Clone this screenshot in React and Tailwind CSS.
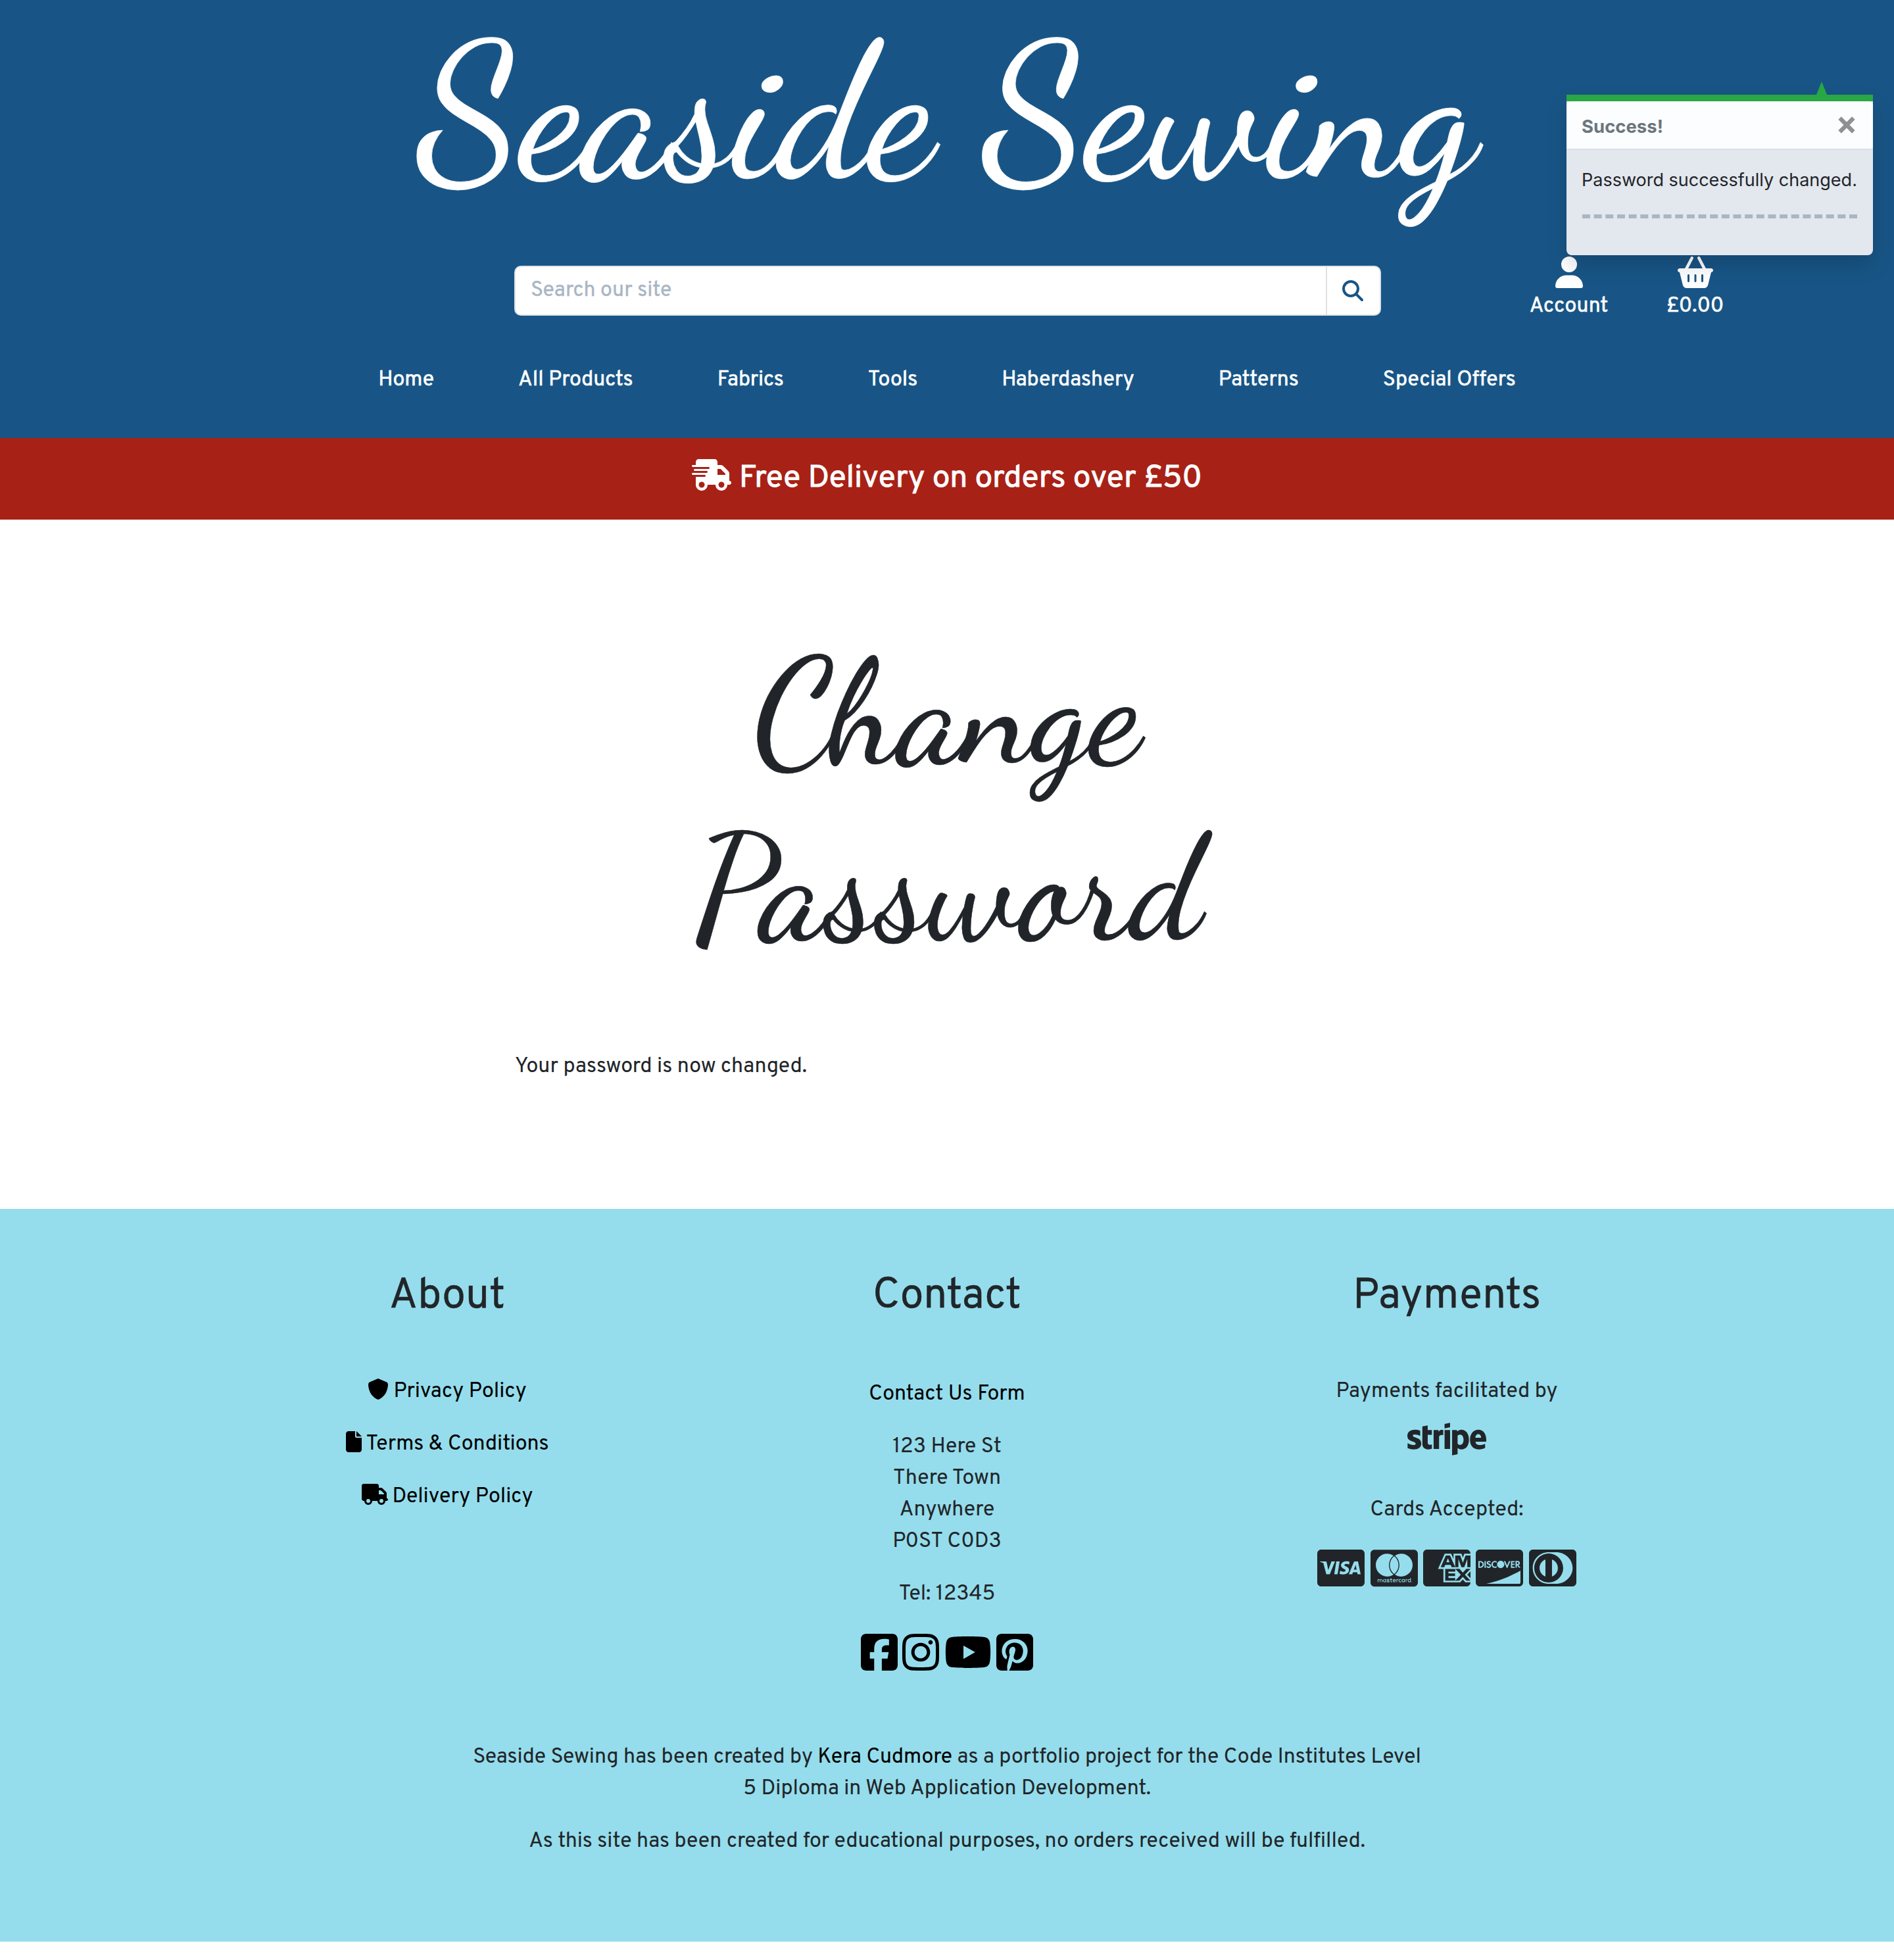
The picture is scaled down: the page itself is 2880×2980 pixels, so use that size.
import React from "react";
import {
  FaUser,
  FaBasketShopping,
  FaMagnifyingGlass,
  FaTruckFast,
  FaShield,
  FaFile,
  FaTruck,
  FaSquareFacebook,
  FaInstagram,
  FaYoutube,
  FaSquarePinterest,
  FaStripe,
  FaCcVisa,
  FaCcMastercard,
  FaCcAmex,
  FaCcDiscover,
  FaCcDinersClub,
} from "react-icons/fa6";

const NAV = ["Home", "All Products", "Fabrics", "Tools", "Haberdashery", "Patterns", "Special Offers"];

const POLICIES = [
  { label: "Privacy Policy", icon: <FaShield className="mt-1 h-8 w-8" /> },
  { label: "Terms & Conditions", icon: <FaFile className="mt-1 h-8 w-6" /> },
  { label: "Delivery Policy", icon: <FaTruck className="mt-1 h-8 w-10" /> },
];

function Toast() {
  return (
    <div className="absolute top-[144px] right-8 w-[466px] rounded-b-[8px] font-[Inter,'Liberation_Sans',sans-serif] shadow-[0_16px_32px_rgba(0,0,0,0.15)]">
      <div className="absolute -top-5 left-[380px] h-0 w-0 border-x-8 border-b-20 border-x-transparent border-b-[#28a745]" />
      <div className="h-[10px] bg-[#28a745]" />
      <div className="bg-[#e3e7ee]">
        <div className="flex h-[74px] items-center justify-between rounded-t-[6px] border-b-2 border-[#d9e0e5] bg-[#fbfdff] pr-[27px] pl-[23px]">
          <strong className="pt-1 text-[27.5px] leading-[42px] font-bold text-[#6c757d]">Success!</strong>
          <svg viewBox="0 0 26 26" className="h-[26px] w-[26px]" stroke="#8e9092" strokeWidth="6.4" fill="none">
            <path d="M2.6 2.6 23.4 23.4M23.4 2.6 2.6 23.4" />
          </svg>
        </div>
      </div>
      <div className="h-[160px] rounded-b-[8px] bg-[#e3e7ee] px-6 pt-[25px]">
        <p className="-ml-px text-[27px] leading-[42px] whitespace-nowrap text-[#212529]">
          Password successfully changed.
        </p>
        <div className="mt-[31px] border-t-6 border-dashed border-[#a9b6c4]" />
      </div>
    </div>
  );
}

export default function App() {
  return (
    <div className="relative min-h-[2980px] w-full bg-white font-[Overpass,Roboto,sans-serif] text-[32px] leading-[48px] text-[#212529]">
      <header className="h-[666px] bg-[#185586] text-white">
        <h1 className="text-center font-['Dancing_Script',cursive] text-[288px] leading-[345.6px] font-medium [-webkit-text-stroke:0.8px_currentColor]">
          Seaside Sewing
        </h1>
        <div className="mt-[44.4px] grid grid-cols-[782px_1318px_1fr]">
          <div />
          <div className="mt-[14px] flex h-[76px] rounded-[10px] border-2 border-[#dee2e6] bg-white">
            <div className="flex-1 px-[23px] pt-[12px] text-[#a9b6c4] [-webkit-text-stroke:0.4px_currentColor]">
              Search our site
            </div>
            <div className="flex w-[82px] items-center justify-center border-l-2 border-[#dee2e6] pr-[2px] text-[#185586]">
              <FaMagnifyingGlass className="h-8 w-8" />
            </div>
          </div>
          <div className="flex [-webkit-text-stroke:0.6px_currentColor]">
            <div className="ml-[225.5px] flex w-[120px] flex-col items-center">
              <FaUser className="h-12 w-[42px]" />
              <span className="mt-1">Account</span>
            </div>
            <div className="ml-[72px] flex w-[120px] flex-col items-center">
              <FaBasketShopping className="h-12 w-[54px]" />
              <span className="mt-1">£0.00</span>
            </div>
          </div>
        </div>
        <nav className="mt-[64px] flex justify-center gap-32 [-webkit-text-stroke:0.6px_currentColor]">
          {NAV.map((item) => (
            <a key={item}>{item}</a>
          ))}
        </nav>
      </header>

      <section className="flex h-[124px] justify-center gap-3 bg-[#a82116] text-[48px] leading-[58px] text-white">
        <FaTruckFast className="mt-8 h-12 w-[60px]" />
        <span className="mt-[33px] [-webkit-text-stroke:0.9px_currentColor]">Free Delivery on orders over £50</span>
      </section>

      <main className="mx-auto h-[1048px] w-[1314px]">
        <h2 className="pt-[160.5px] text-center font-['Dancing_Script',cursive] text-[224px] leading-[268.8px] font-medium [-webkit-text-stroke:0.5px_currentColor]">
          Change
          <br />
          Password
        </h2>
        <p className="mt-[110px] [-webkit-text-stroke:0.15px_currentColor]">Your password is now changed.</p>
      </main>

      <footer className="h-[1114px] bg-[#95ddec] text-center [-webkit-text-stroke:0.15px_currentColor]">
        <div className="mx-auto grid h-[810px] w-[2280px] grid-cols-3 pt-24">
          <div>
            <h3 className="text-[64px] leading-[77px] [-webkit-text-stroke:0.4px_currentColor]">About</h3>
            <div className="mt-[81px] flex flex-col gap-8 text-black">
              {POLICIES.map(({ label, icon }) => (
                <a key={label} className="flex items-start justify-center gap-[7px]">
                  {icon}
                  <span>{label}</span>
                </a>
              ))}
            </div>
          </div>
          <div>
            <h3 className="text-[64px] leading-[77px] [-webkit-text-stroke:0.4px_currentColor]">Contact</h3>
            <p className="mt-[85px] text-black">Contact Us Form</p>
            <p className="mt-8">
              123 Here St
              <br />
              There Town
              <br />
              Anywhere
              <br />
              P0ST C0D3
            </p>
            <p className="mt-8">Tel: 12345</p>
            <div className="mt-8 flex justify-center gap-[7.5px] text-black">
              <FaSquareFacebook className="h-16 w-14" />
              <FaInstagram className="h-16 w-14" />
              <FaYoutube className="h-16 w-[72px]" />
              <FaSquarePinterest className="h-16 w-14" />
            </div>
          </div>
          <div>
            <h3 className="text-[64px] leading-[77px] [-webkit-text-stroke:0.4px_currentColor]">Payments</h3>
            <p className="mt-[81px]">Payments facilitated by</p>
            <FaStripe className="mx-auto h-24 w-[120px]" />
            <p className="mt-[36px]">Cards Accepted:</p>
            <div className="mt-8 flex justify-center gap-[8.4px]">
              <FaCcVisa className="h-16 w-[72px]" />
              <FaCcMastercard className="h-16 w-[72px]" />
              <FaCcAmex className="h-16 w-[72px]" />
              <FaCcDiscover className="h-16 w-[72px]" />
              <FaCcDinersClub className="h-16 w-[72px]" />
            </div>
          </div>
        </div>
        <p>
          Seaside Sewing has been created by <a className="text-black">Kera Cudmore</a> as a portfolio project for the
          Code Institutes Level
          <br />5 Diploma in Web Application Development.
        </p>
        <p className="mt-8">
          As this site has been created for educational purposes, no orders received will be fulfilled.
        </p>
      </footer>

      <Toast />
    </div>
  );
}
